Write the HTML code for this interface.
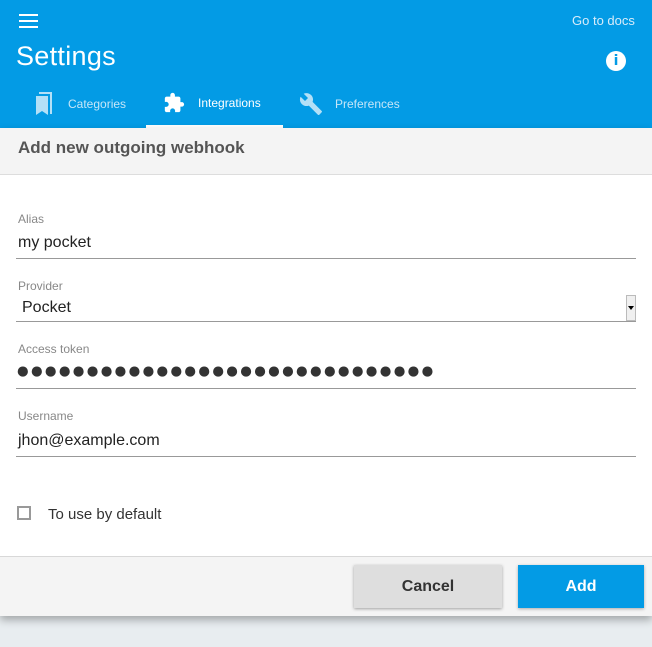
<!DOCTYPE html>
<html><head><meta charset="utf-8"><style>
*{margin:0;padding:0;box-sizing:border-box}
body{width:652px;height:647px;background:#e8edf0;font-family:"Liberation Sans",sans-serif;position:relative;overflow:hidden}
.hdr{position:absolute;left:0;top:0;width:652px;height:128px;background:#039be5;color:#fff}
.abs{position:absolute}
.lbl{position:absolute;left:18px;font-size:12px;color:#888}
.val{position:absolute;left:18px;font-size:16px;color:#222}
.line{position:absolute;left:16px;width:620px;height:1px;background:#999}
</style></head><body>
<div class="hdr">
  <div class="abs" style="left:19px;top:14px;width:19px;height:2px;background:#fff"></div>
  <div class="abs" style="left:19px;top:20px;width:19px;height:2px;background:#fff"></div>
  <div class="abs" style="left:19px;top:26px;width:19px;height:2px;background:#fff"></div>
  <div class="abs" style="left:572px;top:13px;font-size:13px;color:#d8ecfa">Go to docs</div>
  <div class="abs" style="left:16px;top:41px;font-size:27px;letter-spacing:0.3px">Settings</div>
  <div class="abs" style="left:606px;top:51px;width:20px;height:20px;border-radius:50%;background:#fff;color:#039be5;font-weight:bold;font-size:14px;text-align:center;line-height:20px;font-family:'DejaVu Sans',sans-serif">i</div>
  <svg class="abs" style="left:34px;top:92px" width="20" height="24" viewBox="0 0 20 24"><path d="M2 4h12v19l-6-4-6 4z" fill="#b3e0f7"/><path d="M16 2h2v20h-2z" fill="#b3e0f7"/><path d="M5 0h13v2H5z" fill="#b3e0f7"/></svg>
  <div class="abs" style="left:68px;top:97px;font-size:12px;color:#c6e6f8">Categories</div>
  <svg class="abs" style="left:163px;top:92px" width="22" height="22" viewBox="0 0 24 24"><path d="M20.5 11H19V7c0-1.1-.9-2-2-2h-4V3.5C13 2.12 11.88 1 10.5 1S8 2.12 8 3.5V5H4c-1.1 0-1.99.9-1.99 2v3.8H3.5c1.490 0 2.7 1.21 2.7 2.7s-1.21 2.7-2.7 2.7H2V20c0 1.1.9 2 2 2h3.8v-1.5c0-1.49 1.21-2.7 2.7-2.7 1.49 0 2.7 1.21 2.7 2.7V22H17c1.1 0 2-.9 2-2v-4h1.5c1.38 0 2.5-1.12 2.5-2.5S21.880 11 20.5 11z" fill="#fff"/></svg>
  <div class="abs" style="left:198px;top:96px;font-size:12px;color:#fff">Integrations</div>
  <div class="abs" style="left:146px;top:125px;width:137px;height:3px;background:#fff"></div>
  <svg class="abs" style="left:299px;top:92px" width="24" height="24" viewBox="0 0 24 24"><path d="M22.7 19l-9.1-9.1c.9-2.3.4-5-1.5-6.9-2-2-5-2.4-7.4-1.3L9 6 6 9 1.6 4.7C.4 7.1.9 10.1 2.9 12.1c1.9 1.9 4.6 2.4 6.9 1.5l9.1 9.1c.4.4 1 .4 1.4 0l2.3-2.3c.5-.4.5-1.100.1-1.4z" fill="#b3e0f7"/></svg>
  <div class="abs" style="left:335px;top:97px;font-size:12px;color:#c6e6f8">Preferences</div>
</div>
<div class="abs" style="left:0;top:128px;width:652px;height:488px;background:#fff;box-shadow:0 4px 8px rgba(0,0,0,.3)"></div>
<div class="abs" style="left:0;top:128px;width:652px;height:47px;background:#f4f4f4;border-bottom:1px solid #ddd"></div>
<div class="abs" style="left:18px;top:138px;font-size:17px;font-weight:bold;color:#555">Add new outgoing webhook</div>

<div class="lbl" style="top:212px">Alias</div>
<div class="val" style="top:234px">my pocket</div>
<div class="line" style="top:258px"></div>

<div class="lbl" style="top:279px">Provider</div>
<div class="val" style="top:299px;left:22px">Pocket</div>
<div class="abs" style="left:626px;top:295px;width:10px;height:26px;background:#f0f0f0;border:1px solid #bbb"></div>
<div class="abs" style="left:628px;top:306px;width:0;height:0;border-left:3px solid transparent;border-right:3px solid transparent;border-top:4px solid #000"></div>
<div class="line" style="top:321px"></div>

<div class="lbl" style="top:342px">Access token</div>
<div class="abs" style="left:17px;top:364px;font-size:13.3px;color:#333;letter-spacing:2.35px;font-family:'DejaVu Sans',sans-serif;white-space:nowrap">●●●●●●●●●●●●●●●●●●●●●●●●●●●●●●</div>
<div class="line" style="top:388px"></div>

<div class="lbl" style="top:409px">Username</div>
<div class="val" style="top:432px">jhon@example.com</div>
<div class="line" style="top:456px"></div>

<div class="abs" style="left:17px;top:506px;width:14px;height:14px;border:2px solid #999"></div>
<div class="abs" style="left:48px;top:506px;font-size:15px;color:#333">To use by default</div>

<div class="abs" style="left:0;top:556px;width:652px;height:60px;background:#f4f4f4;border-top:1px solid #d8d8d8"></div>
<div class="abs" style="left:354px;top:565px;width:148px;height:43px;background:#dedede;box-shadow:0 1px 3px rgba(0,0,0,.35);font-size:16px;font-weight:bold;color:#333;text-align:center;line-height:43px">Cancel</div>
<div class="abs" style="left:518px;top:565px;width:126px;height:43px;background:#039be5;box-shadow:0 1px 3px rgba(0,0,0,.3);font-size:16px;font-weight:bold;color:#fff;text-align:center;line-height:43px">Add</div>
</body></html>
